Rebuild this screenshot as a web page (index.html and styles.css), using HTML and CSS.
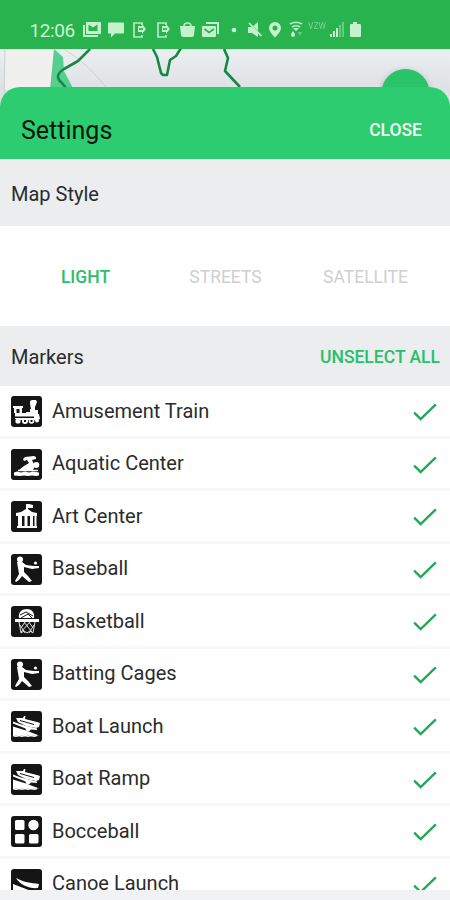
FILE: index.html
```
<!DOCTYPE html>
<html lang="en">
<head>
<meta charset="utf-8">
<title>Settings</title>
<link rel="stylesheet" href="styles.css">
</head>
<body>
<svg class="sprite" aria-hidden="true">
  <symbol id="train" viewBox="0 0 31 31">
    <path d="M2 10h10v2h-1v5h4v-1h4V13h1l-1-5V5l2-1h4l1 2-2 5v3h3v4h1l1 5-3 1H8l-4-1v-6H3v-5H2z"/>
    <path class="ink" d="M5.500 13h3v4h-3zM4 20.500h19V22H4z"/>
    <circle cx="7" cy="25" r="2.600"/><circle cx="14" cy="25" r="3"/><circle cx="20.500" cy="25" r="2.800"/><circle cx="26" cy="24.500" r="2"/>
    <path class="ink" d="M13 24h2v2h-2zM19.500 24h2v2h-2z"/>
  </symbol>
  <symbol id="swim" viewBox="0 0 31 31">
    <path d="M14 8l9-1 2 1v2l-4 1 3 6-2 4H8l5-4 5-3-2-3-3 1-1-2z"/><circle cx="25.300" cy="16" r="3"/>
    <path class="line" d="M7 21.500h20"/>
    <path d="M3 23.500l3-1 4 1 4-1 4 1 4-1 6 1v3l-3 .5-4-.5-4 .5-4-.5-4 .5-6-.5z"/>
  </symbol>
  <symbol id="art" viewBox="0 0 31 31">
    <path d="M15 3h3l4 1v3h-5v1l4 3 5 1v3H5v-3l5-1 5-3zM7 15h4v10H7zM13.500 15h3v10h-3zM19 15h3v10h-3zM23.500 15h2v10h-2zM6 25h20v2H6z"/>
  </symbol>
  <symbol id="bat" viewBox="0 0 31 31">
    <circle cx="9" cy="5.500" r="3"/>
    <path d="M6 8h5l4 3 8 1 5 0v2l-7 1-8-2v5l4 4 4 5-3 1-7-6-3 4-3 2-1-1 4-7-1-6z"/><circle cx="24.500" cy="9" r="1.600"/>
  </symbol>
  <symbol id="basket" viewBox="0 0 31 31">
    <path d="M8 12c-1-6 3-9 8-9s8 4 7 9zM4 13h24v3H4z"/>
    <path class="ink-line" d="M9 9l6-3 7 4M10 12l7-4 4 4"/>
    <path class="net" d="M8 16l2 11M24 16l-2 11M9 19l5 8M13 16l8 10M18 16l4 6M23 19l-5 8M19 16l-9 10M14 16l-4 6M10 27l3-2 3 2 3-2 3 2"/>
  </symbol>
  <symbol id="boat" viewBox="0 0 31 31">
    <path d="M5 7l7 0 1-2 1.500 0-.5 3 12 3 3 1-1 4-3 1-10-2-8-4z"/>
    <path d="M2 10.500l8 3 16 4v1.500l-6-.5-2 2-3-1-.5-2-12.500-5z"/>
    <path d="M2 15.500l13 4 13 5H2z"/>
    <path class="wave" d="M2 24.500l3 .8 3-.8 3 .8 3-.8 3 .8 3-.8 3 .8 3-.8"/>
    <path class="ink-line" d="M9 9.500l14 4"/>
  </symbol>
  <symbol id="bocce" viewBox="0 0 31 31">
    <rect x="4" y="4" width="9.500" height="10" rx="1.500"/><circle cx="22.500" cy="9" r="5.200"/>
    <rect x="4" y="18" width="9.500" height="9.500" rx="1.500"/><rect x="18" y="18" width="9.500" height="9.500" rx="1.500"/>
  </symbol>
  <symbol id="canoe" viewBox="0 0 31 31">
    <path d="M5 9c7 4 15 5 23 6l-1 4c-8 1-18-3-22-10zM2 15l13 5 8 3v8H2z"/>
  </symbol>
  <symbol id="check" viewBox="0 0 24 20">
    <path d="M2 10.500L8 16.500L22 3"/>
  </symbol>
</svg>
<div class="screen">
  <header class="status">
    <span class="clock">12:06</span>
    <svg class="status-icons" viewBox="80 18 290 24">
      <path fill-rule="evenodd" d="M87 22h13a1 1 0 0 1 1 1v10a1 1 0 0 1-1 1H87a1 1 0 0 1-1-1V23a1 1 0 0 1 1-1zm1.500 2.500v6.500h9v-6.500l-4.500 3z"/>
      <path d="M83 25h2v10h13v2H84a1 1 0 0 1-1-1z"/>
      <path d="M109 22.500h14q1 0 1 1v9q0 1-1 1h-8l-4 4v-4h-2q-1 0-1-1v-9q0-1 1-1z"/>
      <g id="phone"><path class="device" d="M142 25v-2h-8v14h8v-2"/><path d="M138 26h4v-2l4 5-4 5v-2h-4z"/><path class="cut" d="M139 29h4"/></g>
      <use href="#phone" x="24"/>
      <path d="M180 26h15l-1 9q-.3 2-2 2h-9q-2 0-2-2z"/><path class="device" d="M184 26q0-3 3.500-3t3.500 3"/>
      <path d="M206 22h13v12h-2V24h-11z"/><path d="M203 26h12q1 0 1 1v9q0 1-1 1h-12q-1 0-1-1v-9q0-1 1-1z"/><path class="cut" d="M204.500 29l4.500 3.500 5-3.500"/>
      <circle cx="234" cy="30" r="2.300"/>
      <path d="M248 27h4l6-5v15l-6-4h-4z"/><path class="cut" d="M248 22l13 13"/><path class="slash" d="M249 23l12.500 13"/>
      <path fill-rule="evenodd" d="M275 22a6 6 0 0 1 6 6c0 4-6 9.500-6 9.500s-6-5.500-6-9.500a6 6 0 0 1 6-6zm0 3.500a2.500 2.500 0 1 0 0 5 2.500 2.500 0 0 0 0-5z"/>
      <path class="device" d="M290 24q6-3.500 12 0M292 27q4-2.500 8 0"/><path d="M293 28h6l-3 3zM293 31l2 3q0 3-2 3t-2-3z"/><path class="dim" d="M298 32h4l-2 4z"/>
      <text class="carrier" x="308" y="29">VZW</text>
      <path d="M330 34h2v3h-2zM333 31h2v6h-2zM336 28h2v9h-2z"/><path class="dim" d="M339 25h2v12h-2zM342 22h2v15h-2z"/>
      <path d="M353 22h4v2h3q1 0 1 1v11q0 1-1 1h-9q-1 0-1-1V25q0-1 1-1h2z"/>
    </svg>
  </header>
  <div class="map">
    <svg class="map-art" viewBox="0 49 450 65">
      <path class="block" d="M5 49H54L50 90H5z"/>
      <path class="park" d="M54 49L63 57L64 71L74 90H50z"/>
      <path class="road" d="M64 49Q86 62 106 87M5 49L4 100"/>
      <path class="trail" d="M90 49L78 61L64 69Q53 76 62 83L66 88M153 49L157 57L161 73L163 75H167L170 60L176 56L181 48M224 49L228 58L225 71L240 87"/>
      <circle class="fab" cx="405.500" cy="93" r="24"/>
    </svg>
  </div>
  <main class="sheet">
    <div class="sheet-head"><h1>Settings</h1><span class="close">CLOSE</span></div>
    <div class="section style-head"><h2>Map Style</h2></div>
    <div class="styles"><span class="on">LIGHT</span><span>STREETS</span><span>SATELLITE</span></div>
    <div class="section marker-head"><h2>Markers</h2><span class="unselect">UNSELECT ALL</span></div>
    <ul class="markers">
      <li><svg class="icon"><use href="#train"/></svg><span class="name">Amusement Train</span><svg class="check"><use href="#check"/></svg></li>
      <li><svg class="icon"><use href="#swim"/></svg><span class="name">Aquatic Center</span><svg class="check"><use href="#check"/></svg></li>
      <li><svg class="icon"><use href="#art"/></svg><span class="name">Art Center</span><svg class="check"><use href="#check"/></svg></li>
      <li><svg class="icon"><use href="#bat"/></svg><span class="name">Baseball</span><svg class="check"><use href="#check"/></svg></li>
      <li><svg class="icon"><use href="#basket"/></svg><span class="name">Basketball</span><svg class="check"><use href="#check"/></svg></li>
      <li><svg class="icon"><use href="#bat"/></svg><span class="name">Batting Cages</span><svg class="check"><use href="#check"/></svg></li>
      <li><svg class="icon"><use href="#boat"/></svg><span class="name">Boat Launch</span><svg class="check"><use href="#check"/></svg></li>
      <li><svg class="icon"><use href="#boat"/></svg><span class="name">Boat Ramp</span><svg class="check"><use href="#check"/></svg></li>
      <li><svg class="icon"><use href="#bocce"/></svg><span class="name">Bocceball</span><svg class="check"><use href="#check"/></svg></li>
      <li><svg class="icon"><use href="#canoe"/></svg><span class="name">Canoe Launch</span><svg class="check"><use href="#check"/></svg></li>
    </ul>
  </main>
  <footer class="nav"></footer>
</div>
</body>
</html>
```
FILE: styles.css
```
* { box-sizing: border-box; }
body { margin: 0; font-family: Roboto, "Liberation Sans", sans-serif; color: #2a2c2d; }
h1, h2, ul { margin: 0; padding: 0; font-weight: 400; }
.sprite { display: none; }
.screen { width: 450px; height: 900px; display: flex; flex-direction: column; overflow: hidden; background: #fff; }

.status { height: 49px; flex: none; display: flex; align-items: flex-start; padding: 18px 0 0 29.5px; background: #29b34f; color: #c9f5d0; }
.clock { width: 50.5px; font-size: 19px; line-height: 25px; letter-spacing: -0.4px; white-space: nowrap; }
.status-icons { width: 290px; height: 24px; fill: #c3f2cb; }
.device { fill: none; stroke: #b5ebbf; stroke-width: 1.7; }
.cut { fill: none; stroke: #29b34f; stroke-width: 1.7; }
.slash { fill: none; stroke: #c3f2cb; stroke-width: 1.7; }
.dim { opacity: .4; }
.carrier { font-size: 8.5px; opacity: .5; }

.map { height: 65px; flex: none; margin-bottom: -27px; background: linear-gradient(#eceff0, #dfe2e5 60%); }
.map-art { display: block; width: 450px; height: 65px; }
.block { fill: #f0f1ee; }
.park { fill: #56ce8c; }
.road { fill: none; stroke: #cdd0d1; stroke-width: 1; }
.trail { fill: none; stroke: #178847; stroke-width: 2.6; stroke-linejoin: round; }
.fab { fill: #29c46a; filter: drop-shadow(0 2px 3px #0004); }

.sheet { height: 803px; flex: none; overflow: hidden; border-radius: 20px 20px 0 0; background: #fff; position: relative; }
.sheet-head { height: 72px; padding: 0 28px 0 21px; display: flex; align-items: center; justify-content: space-between; background: #2ecc71; }
h1 { font-size: 25px; line-height: 28px; color: #07150c; padding-top: 15px; }
.close { font-size: 17.5px; font-weight: 500; color: #effff3; padding-top: 13px; }
.section { display: flex; align-items: center; justify-content: space-between; padding: 0 10px 0 11px; background: #ebedee; }
h2 { font-size: 20px; line-height: 24px; }
.style-head { height: 67px; padding-top: 2px; }
.styles { height: 100px; display: grid; grid-template-columns: repeat(3, 140px); justify-content: center; align-items: center; text-align: center; font-size: 17.5px; color: #cfcfcf; padding: 2px 0 0 1px; }
.styles .on { color: #2ebd6b; font-weight: 500; }
.marker-head { height: 60px; padding-top: 2px; }
.unselect { font-size: 17.5px; color: #2abf69; font-weight: 500; }
.markers { list-style: none; }
.markers li { height: 52.5px; display: flex; align-items: center; padding: 0 12px 0 10.5px; border-bottom: 3px solid #f7f7f7; }
.icon { width: 31px; height: 31px; flex: none; border-radius: 3px; background: #151515; fill: #fff; margin-top: 2px; }
.name { flex: 1; margin-left: 10.5px; font-size: 20px; line-height: 24px; }
.check { width: 26px; height: 22px; margin-top: 3px; fill: none; stroke: #22a957; stroke-width: 2.2; }
.ink { fill: #151515; }
.line { fill: none; stroke: #fff; stroke-width: 1.7; }
.ink-line { fill: none; stroke: #151515; stroke-width: 1; }
.net { fill: none; stroke: #ddd; stroke-width: 1; }
.wave { fill: none; stroke: #fff; stroke-width: 1.5; }
.nav { flex: 1; background: #f0f2f3; }
```
